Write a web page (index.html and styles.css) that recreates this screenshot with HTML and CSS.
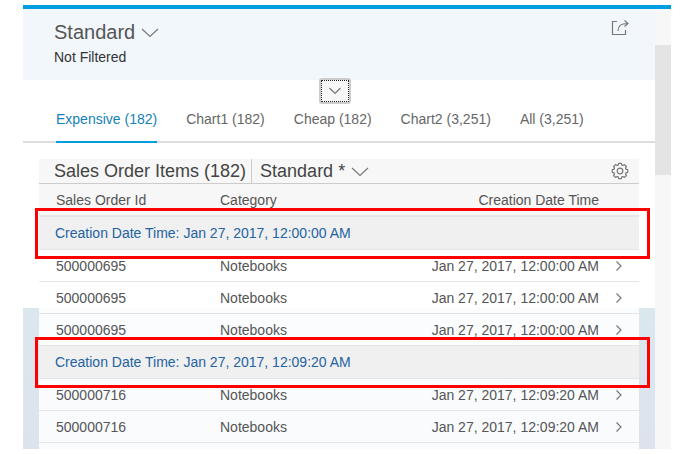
FILE: index.html
```html
<!DOCTYPE html>
<html lang="en">
<head>
<meta charset="utf-8">
<meta name="viewport" content="width=device-width, initial-scale=1">
<title>Sales Order Items</title>
<link rel="stylesheet" href="styles.css">
</head>
<body>
<div class="shell">
  <main class="page">
    <header class="page-header">
      <div>
        <button class="variant variant-large" type="button">Standard
          <svg class="chevron" width="18" height="10" viewBox="0 0 18 10"><path d="M1 1l8 7.500 8-7.500"/></svg>
        </button>
        <p class="filter-state">Not Filtered</p>
      </div>
      <button class="icon-button" type="button" aria-label="Share">
        <svg width="18" height="16" viewBox="0 0 18 16"><path d="M6 1.500H1.500v13h13V10M7 11c0-5 2.500-7.500 10-7.500M13.500.5l3.500 3-3.500 3"/></svg>
      </button>
      <button class="expand" type="button" aria-label="Expand header">
        <svg width="14" height="8" viewBox="0 0 14 8"><path d="M1.500 1l5.500 5.500L12.500 1"/></svg>
      </button>
    </header>
    <nav class="tabs">
      <a class="tab active" href="#expensive">Expensive (182)</a>
      <a class="tab" href="#chart1">Chart1 (182)</a>
      <a class="tab" href="#cheap">Cheap (182)</a>
      <a class="tab" href="#chart2">Chart2 (3,251)</a>
      <a class="tab" href="#all">All (3,251)</a>
    </nav>
    <section class="content" id="expensive">
      <div class="toolbar">
        <h2 class="title">Sales Order Items (182)</h2>
        <button class="variant variant-table" type="button">Standard *
          <svg class="chevron" width="18" height="10" viewBox="0 0 18 10"><path d="M1 1l8 7.500 8-7.500"/></svg>
        </button>
        <button class="icon-button settings" type="button" aria-label="Settings">
          <svg width="18" height="18" viewBox="0 0 18 18"><path stroke-linejoin="round" d="M14.900 7.200L16.700 7.650V10.350L14.900 10.800 14.500 11.900 15.400 13.500 13.500 15.400 11.900 14.500 10.800 14.900 10.350 16.700H7.650L7.200 14.900 6.100 14.500 4.500 15.400 2.600 13.500 3.500 11.900 3.100 10.800 1.300 10.350V7.650L3.100 7.200 3.500 6.100 2.600 4.500 4.500 2.600 6.100 3.500 7.200 3.100 7.650 1.300H10.350L10.800 3.100 11.900 3.500 13.500 2.600 15.400 4.500 14.500 6.100z"/><circle cx="9" cy="9" r="2.800"/></svg>
        </button>
      </div>
      <table class="items">
        <thead>
          <tr><th class="id" scope="col">Sales Order Id</th><th scope="col">Category</th><th class="date" scope="col">Creation Date Time</th><td class="nav"></td></tr>
        </thead>
        <tbody>
          <tr class="group"><th colspan="4" scope="rowgroup">Creation Date Time: Jan 27, 2017, 12:00:00 AM<span class="highlight"></span></th></tr>
          <tr><td>500000695</td><td>Notebooks</td><td class="date">Jan 27, 2017, 12:00:00 AM</td><td class="nav"><svg width="8" height="12" viewBox="0 0 8 12"><path d="M1.500 1.500L6 6l-4.500 4.500"/></svg></td></tr>
          <tr><td>500000695</td><td>Notebooks</td><td class="date">Jan 27, 2017, 12:00:00 AM</td><td class="nav"><svg width="8" height="12" viewBox="0 0 8 12"><path d="M1.500 1.500L6 6l-4.500 4.500"/></svg></td></tr>
          <tr><td>500000695</td><td>Notebooks</td><td class="date">Jan 27, 2017, 12:00:00 AM</td><td class="nav"><svg width="8" height="12" viewBox="0 0 8 12"><path d="M1.500 1.500L6 6l-4.500 4.500"/></svg></td></tr>
        </tbody>
        <tbody>
          <tr class="group"><th colspan="4" scope="rowgroup">Creation Date Time: Jan 27, 2017, 12:09:20 AM<span class="highlight"></span></th></tr>
          <tr><td>500000716</td><td>Notebooks</td><td class="date">Jan 27, 2017, 12:09:20 AM</td><td class="nav"><svg width="8" height="12" viewBox="0 0 8 12"><path d="M1.500 1.500L6 6l-4.500 4.500"/></svg></td></tr>
          <tr><td>500000716</td><td>Notebooks</td><td class="date">Jan 27, 2017, 12:09:20 AM</td><td class="nav"><svg width="8" height="12" viewBox="0 0 8 12"><path d="M1.500 1.500L6 6l-4.500 4.500"/></svg></td></tr>
        </tbody>
      </table>
      <div class="table-end"></div>
    </section>
  </main>
  <div class="scroll-track"><div class="scroll-thumb"></div></div>
</div>
</body>
</html>
```
FILE: styles.css
```css
* {
  box-sizing: border-box;
}

body {
  margin: 0;
  background: #fff;
  color: #555;
  font: 14px/16px "Liberation Sans", Arial, sans-serif;
}

button {
  margin: 0;
  padding: 0;
  border: 0;
  background: none;
  color: inherit;
  font: inherit;
}

svg {
  display: block;
  fill: none;
  stroke: #777;
  stroke-width: 1.2;
}

.shell {
  display: grid;
  grid-template-columns: 1fr 16px;
  margin: 5px 9px 5px 23px;
  border-top: 4px solid #009de0;
}

.page-header {
  position: relative;
  display: flex;
  justify-content: space-between;
  align-items: flex-start;
  padding: 11px 26px 15px 31px;
  background: #f2f7fc;
}

.variant {
  display: flex;
  align-items: center;
  color: #444;
  white-space: nowrap;
}

.variant-large {
  gap: 6px;
  font-size: 20px;
  line-height: 24px;
  color: #555;
}

.variant-table {
  gap: 6px;
  padding-left: 8px;
  border-left: 1px solid #ccc;
  font-size: 18px;
  line-height: 23px;
}

.chevron {
  margin-top: 2px;
}

.filter-state {
  margin: 5px 0 0;
  color: #333;
}

.expand {
  position: absolute;
  bottom: -24px;
  left: 296px;
  display: flex;
  align-items: center;
  justify-content: center;
  width: 32px;
  height: 26px;
  border: 2px solid #ccc;
  border-radius: 3px;
  background: #f7f7f7;
  outline: 1px dotted #222;
  outline-offset: -3px;
}

.tabs {
  display: flex;
  gap: 29px;
  padding: 31px 33px 0;
  border-bottom: 2px solid #ddd;
}

.tab {
  margin-bottom: -2px;
  padding-bottom: 14px;
  border-bottom: 2px solid transparent;
  color: #666;
  text-decoration: none;
  white-space: nowrap;
}

.tab.active {
  border-color: #009de0;
  color: #1482b8;
}

.content {
  padding: 16px 16px 0;
  background: linear-gradient(#fff 165px, #dae8ee 165px, #dde3ed);
}

.toolbar {
  display: flex;
  gap: 5px;
  padding: 0 10px 0 15px;
  border-bottom: 1px solid #ccc;
  background: #f7f7f7;
}

.title {
  margin: 0;
  color: #444;
  font-size: 18px;
  font-weight: 400;
  line-height: 24px;
}

.settings {
  display: flex;
  align-items: center;
  margin-left: auto;
}

.items {
  width: 100%;
  border-collapse: separate;
  border-spacing: 0;
  table-layout: fixed;
}

.items th,
.items td {
  height: 32px;
  padding: 0 0 0 17px;
  border-bottom: 1px solid #e5e5e5;
  background: rgba(255, 255, 255, 0.85);
  font-weight: 400;
  text-align: left;
  white-space: nowrap;
}

.items thead th,
.items thead td {
  height: 33px;
  border-bottom: 2px solid #e5e5e5;
  background: #f7f7f7;
}

.items .id {
  width: 164px;
}

.items .date {
  width: 220px;
  padding: 0;
  text-align: right;
}

.items .nav {
  width: 40px;
  padding: 0 0 0 16px;
}

.items .group th {
  position: relative;
  height: 33px;
  padding-left: 16px;
  background: #f0f0f0;
  color: #2463a3;
}

.highlight {
  position: absolute;
  inset: -9px -11px -10px -4px;
  border: 3px solid #f00;
}

.table-end {
  height: 6px;
  background: rgba(255, 255, 255, 0.85);
}

.scroll-track {
  padding-top: 36px;
  background: #f7f7f7;
}

.scroll-thumb {
  height: 130px;
  background: #e4e4e4;
}
```
